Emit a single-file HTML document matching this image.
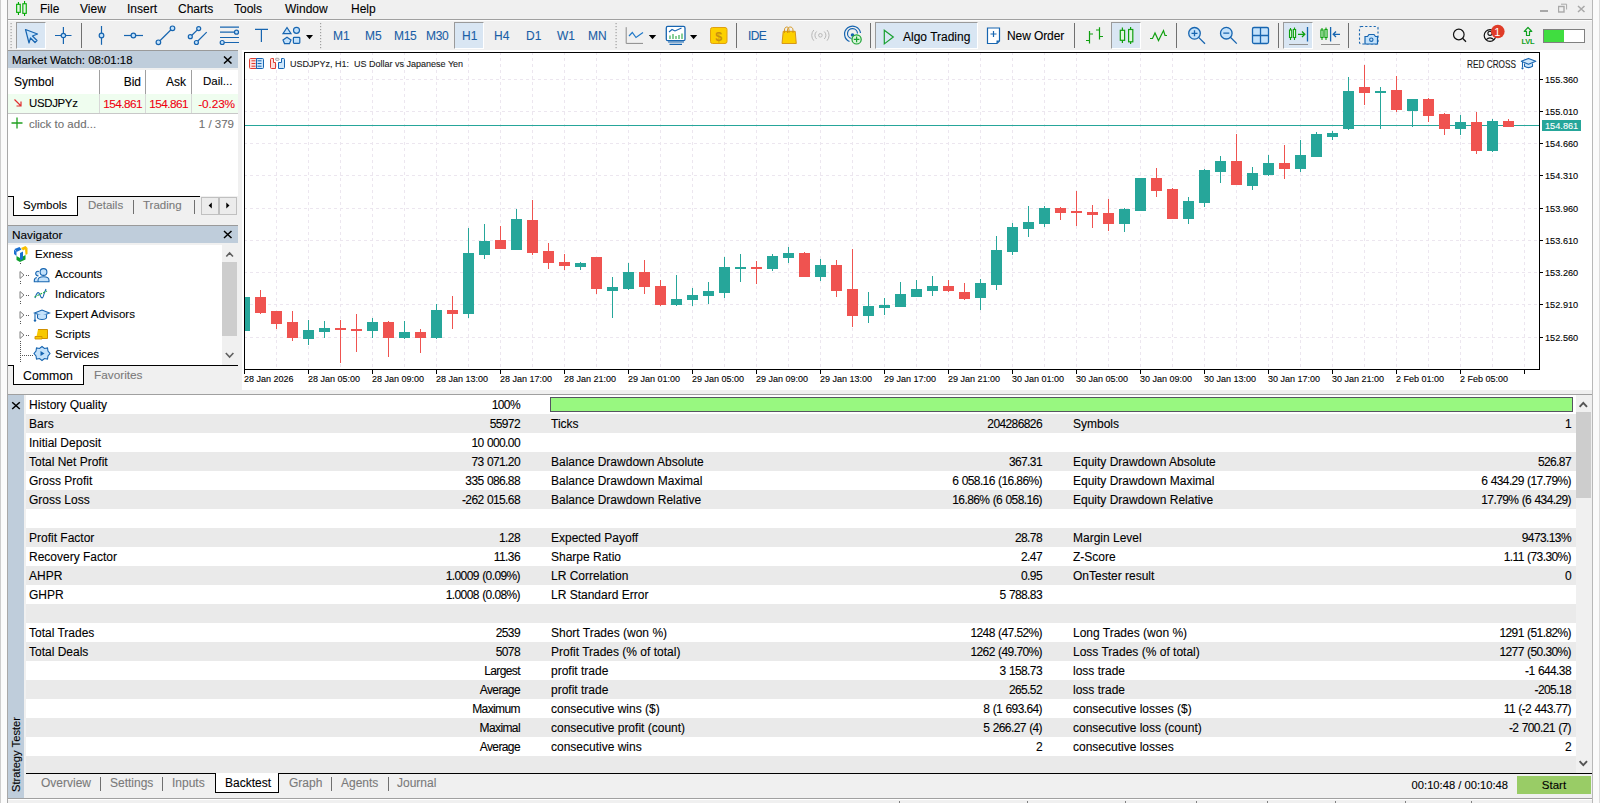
<!DOCTYPE html>
<html><head><meta charset="utf-8"><style>
*{margin:0;padding:0;box-sizing:border-box}
html,body{width:1600px;height:803px;overflow:hidden;background:#f0f0f0;font-family:"Liberation Sans",sans-serif;color:#000}
.a{position:absolute}
.t{position:absolute;white-space:nowrap;line-height:1}
.t{-webkit-text-stroke:0.1px currentColor}

</style></head><body>
<div class="a" style="left:0;top:0;width:8px;height:803px;background:#fbfbfb;border-left:1px solid #cdcdcd"></div>
<div class="a" style="left:7px;top:0;width:1px;height:803px;background:#a8a8a8"></div>
<div class="a" style="left:1592px;top:0;width:1px;height:803px;background:#b8b8b8"></div>
<div class="a" style="left:1593px;top:0;width:7px;height:803px;background:#fbfbfb;border-right:1px solid #dcdcdc"></div>
<div class="a" style="left:8px;top:19px;width:1584px;height:1px;background:#a0a0a0"></div>
<div class="a" style="left:8px;top:20px;width:1584px;height:1px;background:#fdfdfd"></div>
<svg class="a" style="left:15px;top:0px" width="14" height="18" viewBox="0 0 14 18">
<g stroke="#00a800" stroke-width="1.1" fill="#e2f8e2"><rect x="1.65" y="4.3" width="3.6" height="8.05"/><rect x="7.85" y="3.75" width="3.4" height="9.6"/></g>
<g stroke="#00a800" stroke-width="1.1"><line x1="3.45" y1="2" x2="3.45" y2="4.3"/><line x1="3.45" y1="12.35" x2="3.45" y2="15"/><line x1="9.55" y1="1" x2="9.55" y2="3.75"/><line x1="9.55" y1="13.35" x2="9.55" y2="16"/></g>
</svg>
<div class="t" style="left:40px;top:3px;font-size:12px">File</div>
<div class="t" style="left:80px;top:3px;font-size:12px">View</div>
<div class="t" style="left:127px;top:3px;font-size:12px">Insert</div>
<div class="t" style="left:178px;top:3px;font-size:12px">Charts</div>
<div class="t" style="left:234px;top:3px;font-size:12px">Tools</div>
<div class="t" style="left:285px;top:3px;font-size:12px">Window</div>
<div class="t" style="left:351px;top:3px;font-size:12px">Help</div>
<div class="a" style="left:1540px;top:10px;width:8px;height:1.5px;background:#a8a8a8"></div>
<svg class="a" style="left:1558px;top:3px" width="10" height="10" viewBox="0 0 10 10"><rect x="0.5" y="3.5" width="5.5" height="5.5" fill="none" stroke="#a8a8a8" stroke-width="1.4"/><path d="M3 1.2H8.6V6.5" fill="none" stroke="#a8a8a8" stroke-width="1"/></svg>
<svg class="a" style="left:1577px;top:5px" width="9" height="8" viewBox="0 0 9 8"><path d="M1 1L7.5 7M7.5 1L1 7" stroke="#a8a8a8" stroke-width="1.5"/></svg>
<div class="a" style="left:16px;top:22px;width:30px;height:27px;background:#d9e6f3;border-top:1px solid #9a9a9a;border-left:1px solid #9a9a9a;border-bottom:1px solid #fff;border-right:1px solid #fff"></div>
<div class="a" style="left:454px;top:22px;width:30px;height:27px;background:#d9e6f3;border-top:1px solid #9a9a9a;border-left:1px solid #9a9a9a;border-bottom:1px solid #fff;border-right:1px solid #fff"></div>
<div class="a" style="left:875px;top:22px;width:103px;height:27px;background:#d9e6f3;border-top:1px solid #9a9a9a;border-left:1px solid #9a9a9a;border-bottom:1px solid #fff;border-right:1px solid #fff"></div>
<div class="a" style="left:1111px;top:22px;width:30px;height:27px;background:#d9e6f3;border-top:1px solid #9a9a9a;border-left:1px solid #9a9a9a;border-bottom:1px solid #fff;border-right:1px solid #fff"></div>
<div class="a" style="left:1283px;top:22px;width:30px;height:27px;background:#d9e6f3;border-top:1px solid #9a9a9a;border-left:1px solid #9a9a9a;border-bottom:1px solid #fff;border-right:1px solid #fff"></div>
<div class="t" style="left:333px;top:30px;font-size:12px;color:#1a5fa6">M1</div>
<div class="t" style="left:365px;top:30px;font-size:12px;color:#1a5fa6">M5</div>
<div class="t" style="left:394px;top:30px;font-size:12px;color:#1a5fa6;letter-spacing:-0.3px">M15</div>
<div class="t" style="left:426px;top:30px;font-size:12px;color:#1a5fa6;letter-spacing:-0.3px">M30</div>
<div class="t" style="left:462px;top:30px;font-size:12px;color:#1a5fa6">H1</div>
<div class="t" style="left:494px;top:30px;font-size:12px;color:#1a5fa6">H4</div>
<div class="t" style="left:526px;top:30px;font-size:12px;color:#1a5fa6">D1</div>
<div class="t" style="left:557px;top:30px;font-size:12px;color:#1a5fa6">W1</div>
<div class="t" style="left:588px;top:30px;font-size:12px;color:#1a5fa6">MN</div>
<div class="t" style="left:748px;top:30px;font-size:12px;letter-spacing:-0.6px;color:#1a5fa6">IDE</div>
<div class="t" style="left:903px;top:31px;font-size:12px">Algo Trading</div>
<div class="t" style="left:1007px;top:30px;font-size:12px;letter-spacing:-0.1px">New Order</div>
<svg class="a" style="left:0;top:0" width="1600" height="50" viewBox="0 0 1600 50">
<g fill="#a0a0a0">
<rect x="10.5" y="23" width="1.2" height="1.2"/><rect x="10.5" y="26" width="1.2" height="1.2"/><rect x="10.5" y="29" width="1.2" height="1.2"/><rect x="10.5" y="32" width="1.2" height="1.2"/><rect x="10.5" y="35" width="1.2" height="1.2"/><rect x="10.5" y="38" width="1.2" height="1.2"/><rect x="10.5" y="41" width="1.2" height="1.2"/><rect x="10.5" y="44" width="1.2" height="1.2"/><rect x="10.5" y="47" width="1.2" height="1.2"/>
<rect x="320" y="23" width="1.2" height="1.2"/><rect x="320" y="26" width="1.2" height="1.2"/><rect x="320" y="29" width="1.2" height="1.2"/><rect x="320" y="32" width="1.2" height="1.2"/><rect x="320" y="35" width="1.2" height="1.2"/><rect x="320" y="38" width="1.2" height="1.2"/><rect x="320" y="41" width="1.2" height="1.2"/><rect x="320" y="44" width="1.2" height="1.2"/><rect x="320" y="47" width="1.2" height="1.2"/>
<rect x="615.5" y="23" width="1.2" height="1.2"/><rect x="615.5" y="26" width="1.2" height="1.2"/><rect x="615.5" y="29" width="1.2" height="1.2"/><rect x="615.5" y="32" width="1.2" height="1.2"/><rect x="615.5" y="35" width="1.2" height="1.2"/><rect x="615.5" y="38" width="1.2" height="1.2"/><rect x="615.5" y="41" width="1.2" height="1.2"/><rect x="615.5" y="44" width="1.2" height="1.2"/><rect x="615.5" y="47" width="1.2" height="1.2"/>
</g>
<g fill="#707070">
<rect x="81" y="23" width="1" height="25"/><rect x="736" y="23" width="1" height="25"/><rect x="870" y="23" width="1" height="25"/><rect x="1074" y="23" width="1" height="25"/><rect x="1176" y="23" width="1" height="25"/><rect x="1278" y="23" width="1" height="25"/><rect x="1348" y="23" width="1" height="25"/>
</g>
<!-- arrow cursor -->
<path d="M25.5 29.5 L37.5 34 L32.5 36 L37 40.5 L35 42.5 L30.5 38 L29 43 Z" fill="#c4e2fb" stroke="#1765b0" stroke-width="1.2" stroke-linejoin="round"/>
<g stroke="#1765b0" stroke-width="1.2" fill="#c4e2fb">
<!-- crosshair -->
<path d="M55 35.5H71.5M63.4 27V44" fill="none"/>
<circle cx="63.4" cy="35.5" r="2.2"/>
<!-- vline -->
<path d="M101.5 26V44.8" fill="none"/><circle cx="101.5" cy="35.5" r="2.3"/>
<!-- hline -->
<path d="M124 35.5H143" fill="none"/><circle cx="133.4" cy="35.5" r="2.3"/>
<!-- trend -->
<path d="M158.4 42.3L172.5 28.3" fill="none"/><circle cx="158.4" cy="42.3" r="2.3"/><circle cx="172.5" cy="28.3" r="2.3"/>
<!-- channel -->
<path d="M190.3 36.7L198.7 28.6M196.4 42.5L206.7 32.2" fill="none"/><circle cx="190.3" cy="36.7" r="2"/><circle cx="198.7" cy="28.6" r="2"/><circle cx="196.4" cy="42.5" r="2"/>
<!-- fibo -->
<path d="M220 27.2H239M220 32.2H237M220 37.5H239M224 42.5H239" fill="none"/><circle cx="236.5" cy="32.2" r="2"/><circle cx="222.2" cy="42.5" r="2"/>
<!-- T -->
<path d="M255 29.4H268M261.4 29.4V42" fill="none"/>
<!-- shapes -->
<path d="M287 27.5L291 33.6H283Z"/><circle cx="296.5" cy="30.3" r="3"/><path d="M287 37.2L291 40L289.5 43.6H284.5L283 40Z"/><rect x="293.4" y="37.3" width="6.4" height="6.1" rx="0.8"/>
</g>
<g fill="#000"><path d="M306 35H313L309.5 39.2Z"/><path d="M648.8 35H656.2L652.5 39.2Z"/><path d="M690 35H697.2L693.6 39.2Z"/></g>
<!-- line chart -->
<path d="M626.2 27.2V43.4H643" fill="none" stroke="#8a8a8a" stroke-width="1"/>
<path d="M629 36L632.3 32.5L636 37.5L643 32.5" fill="none" stroke="#1f78c8" stroke-width="1.2"/>
<!-- template -->
<rect x="666.3" y="26.4" width="18.7" height="14.3" rx="1.5" fill="#fff" stroke="#1765b0" stroke-width="1.3"/>
<path d="M668 42H684M669.5 44.3H682" stroke="#1765b0" stroke-width="1.2"/>
<path d="M669 32L672 29.5L675 31L681.5 28" fill="none" stroke="#1765b0" stroke-width="1.1"/>
<g fill="#10a030"><rect x="669.5" y="35.5" width="1" height="3.5"/><rect x="672.5" y="34" width="1" height="5"/><rect x="675.5" y="36" width="1" height="3"/><rect x="678.5" y="35" width="1" height="4"/><rect x="681.5" y="33.5" width="1" height="5.5"/></g>
<!-- $ -->
<rect x="710.5" y="27.5" width="16.5" height="16" rx="2" fill="#fdd000" stroke="#e0a010" stroke-width="1"/>
<text x="718.8" y="40.5" text-anchor="middle" font-family="Liberation Sans" font-size="12.5" font-weight="bold" fill="#c89010">$</text>
<!-- bag -->
<path d="M782 43.5L783.2 31.3H795.2L796.3 43.5Z" fill="#fdd000" stroke="#d29010" stroke-width="0.9"/>
<path d="M784.5 33V30C784.5 26 789 26 789 30V33M787.5 33V30C787.5 26 793 26 793 30V33" fill="none" stroke="#d29010" stroke-width="0.9"/>
<!-- signal -->
<g fill="none" stroke="#b8b8b8" stroke-width="1"><circle cx="820.4" cy="35.3" r="1.8"/><path d="M816.6 31.5A5 5 0 0 0 816.6 39M824.2 31.5A5 5 0 0 1 824.2 39M813.8 30A8 8 0 0 0 813.8 40.7M827 30A8 8 0 0 1 827 40.7"/></g>
<!-- vps -->
<g fill="none" stroke="#1765b0" stroke-width="1.2"><path d="M849.5 41.5A8 8 0 1 1 860.5 33"/><path d="M851.5 38.5A5 5 0 1 1 857.5 33.5"/></g>
<circle cx="852.5" cy="35" r="1.8" fill="#1765b0"/>
<circle cx="856.6" cy="39.4" r="4.6" fill="#d8f5d8" stroke="#18a030" stroke-width="1.2"/>
<path d="M856.6 36.6V42.2M853.8 39.4H859.4" stroke="#18a030" stroke-width="1.2"/>
<!-- algo triangle -->
<path d="M884.3 30.3L893.3 37.1L884.3 43.9Z" fill="none" stroke="#18a030" stroke-width="1.2"/>
<!-- new order doc -->
<path d="M987.5 28H999.5V41L997 43.5H987.5Z" fill="#fff" stroke="#1765b0" stroke-width="1.2"/>
<path d="M996.5 43.5L999.5 40.5H996.5Z" fill="#1765b0"/>
<path d="M993.5 31V37M990.5 34H996.5" stroke="#1765b0" stroke-width="1.2"/>
<!-- bar chart -->
<g stroke="#10a010" stroke-width="1.2" fill="none"><path d="M1089.5 31V43.5M1086 40.5H1089.5M1089.5 34H1093M1099.5 27.2V39.5M1096 30H1099.5M1099.5 36.5H1103"/>
<!-- candle icon -->
<path d="M1122.4 27.5V43M1130.6 27V44"/></g>
<rect x="1120.3" y="30.3" width="4.3" height="10" fill="#dff7df" stroke="#10a010" stroke-width="1.2"/>
<rect x="1128.6" y="29.5" width="4.2" height="12.3" fill="#dff7df" stroke="#10a010" stroke-width="1.2"/>
<path d="M1150 38.5H1152.5L1155 33L1158.5 40.5L1163.5 30.5L1165 35.5H1167" fill="none" stroke="#10a010" stroke-width="1.2"/>
<!-- zoom in/out -->
<g stroke="#1765b0" stroke-width="1.3" fill="#c4e2fb"><circle cx="1194.5" cy="33.3" r="5.8"/><circle cx="1226.3" cy="33.2" r="5.8"/></g>
<path d="M1198.6 37.4L1205 43.8M1191.5 33.3H1197.5M1194.5 30.3V36.3M1230.4 37.3L1236.8 43.6M1223.3 33.2H1229.3" stroke="#1765b0" stroke-width="1.3"/>
<!-- grid -->
<rect x="1252.5" y="27.5" width="16" height="16" rx="1.5" fill="#c4e2fb" stroke="#1765b0" stroke-width="1.3"/>
<path d="M1260.5 27.5V43.5M1252.5 35.5H1268.5" stroke="#1765b0" stroke-width="1.3"/>
<!-- autoscroll -->
<g stroke="#10a010" stroke-width="1.1" fill="#dff7df"><path d="M1290.5 28V40M1294.5 27.5V40" fill="none"/><rect x="1289.5" y="30" width="2.2" height="7.5"/><rect x="1293.4" y="29.5" width="2.2" height="8"/>
<path d="M1298 34.3H1304.5M1302 31.5L1304.8 34.3L1302 37" fill="none" stroke-width="1.3"/>
<path d="M1322 28V40M1326 27.5V40" fill="none"/><rect x="1320.9" y="30" width="2.2" height="7.5"/><rect x="1324.9" y="29.5" width="2.2" height="8"/></g>
<path d="M1307.5 27V41.5M1330.6 27V41.5M1333.5 34.3H1340M1336 31.5L1333.2 34.3L1336 37" fill="none" stroke="#1765b0" stroke-width="1.3"/>
<path d="M1289 44.5H1308M1321 44.5H1340" stroke="#909090" stroke-width="1"/>
<!-- screenshot -->
<rect x="1359.5" y="26.5" width="18.5" height="17.5" rx="1.5" fill="none" stroke="#1765b0" stroke-width="1.1" stroke-dasharray="2.2 2"/>
<path d="M1365 36.5H1367.5L1369 34.5H1374L1375.5 36.5H1377.5V44H1365Z" fill="#c4e2fb" stroke="#1765b0" stroke-width="1.2"/>
<circle cx="1371.3" cy="39.7" r="1.7" fill="none" stroke="#1765b0" stroke-width="1.1"/>
<!-- search -->
<circle cx="1458.8" cy="34.5" r="5.3" fill="none" stroke="#111" stroke-width="1.2"/><path d="M1462.6 38.3L1466 41.8" stroke="#111" stroke-width="1.3"/>
<!-- account -->
<circle cx="1490" cy="35.5" r="5.8" fill="none" stroke="#111" stroke-width="1.2"/>
<circle cx="1490" cy="33.3" r="2.1" fill="none" stroke="#111" stroke-width="1.1"/>
<path d="M1486 39.8Q1490 35.8 1494 39.8" fill="none" stroke="#111" stroke-width="1.1"/>
<circle cx="1497.8" cy="31.5" r="6.8" fill="#e03c28"/>
<text x="1497.3" y="35.8" text-anchor="middle" font-family="Liberation Sans" font-size="11" fill="#fff">1</text>
<!-- LVL -->
<path d="M1528 27.5L1531.8 31.3H1529.5V35.5H1526.5V31.3H1524.2Z" fill="none" stroke="#10a020" stroke-width="1.2" stroke-linejoin="round"/>
<text x="1528" y="43.5" text-anchor="middle" font-family="Liberation Sans" font-weight="bold" font-size="7.5" fill="#10a020" letter-spacing="-0.2">LVL</text>
<!-- progress -->
<rect x="1543.5" y="29.5" width="41" height="13" fill="#fff" stroke="#808080" stroke-width="1"/>
<rect x="1544" y="30" width="20" height="12" fill="#40dd40"/>
</svg>
<!-- Market Watch -->
<div class="a" style="left:8px;top:50px;width:230px;height:1px;background:#9a9a9a"></div>
<div class="a" style="left:8px;top:51px;width:230px;height:17px;background:#bfcddb"></div>
<div class="t" style="left:12px;top:55px;font-size:11.4px">Market Watch: 08:01:18</div>
<svg class="a" style="left:223px;top:56px" width="10" height="8" viewBox="0 0 10 8"><path d="M1 0.5L8.5 7.5M8.5 0.5L1 7.5" stroke="#000" stroke-width="1.5"/></svg>
<div class="a" style="left:8px;top:70px;width:230px;height:126px;background:#fff"></div>
<div class="a" style="left:99px;top:70px;width:1px;height:24px;background:#a0a0a0"></div>
<div class="a" style="left:145px;top:70px;width:1px;height:24px;background:#a0a0a0"></div>
<div class="a" style="left:191px;top:70px;width:1px;height:24px;background:#a0a0a0"></div>
<div class="t" style="left:14px;top:76px;font-size:12px">Symbol</div>
<div class="t" style="left:100px;width:41px;text-align:right;top:76px;font-size:12px">Bid</div>
<div class="t" style="left:146px;width:40px;text-align:right;top:76px;font-size:12px">Ask</div>
<div class="t" style="left:203px;top:76px;font-size:11.5px">Dail...</div>
<div class="a" style="left:8px;top:94px;width:230px;height:19px;background:#effdef"></div>
<div class="a" style="left:99px;top:94px;width:1px;height:19px;background:#d8d8d8"></div>
<div class="a" style="left:145px;top:94px;width:1px;height:19px;background:#d8d8d8"></div>
<div class="a" style="left:191px;top:94px;width:1px;height:19px;background:#d8d8d8"></div>
<svg class="a" style="left:13px;top:98px" width="10" height="10" viewBox="0 0 10 10"><path d="M1.5 1.5L8 8M8 3.5V8H3.5" fill="none" stroke="#e03030" stroke-width="1.2"/></svg>
<div class="t" style="left:29px;top:98px;font-size:11.4px;letter-spacing:-0.3px">USDJPYz</div>
<div class="t" style="left:100px;width:42px;text-align:right;top:99px;font-size:11.8px;letter-spacing:-0.55px;color:#f00010">154.861</div>
<div class="t" style="left:146px;width:42px;text-align:right;top:99px;font-size:11.8px;letter-spacing:-0.55px;color:#f00010">154.861</div>
<div class="t" style="left:192px;width:43px;text-align:right;top:99px;font-size:11.8px;letter-spacing:-0.1px;color:#f00010">-0.23%</div>
<div class="a" style="left:8px;top:113px;width:230px;height:1px;background:#c8c8c8"></div>
<svg class="a" style="left:11px;top:117px" width="12" height="12" viewBox="0 0 12 12"><path d="M6 0.5V11.5M0.5 6H11.5" stroke="#20a020" stroke-width="1.3"/></svg>
<div class="t" style="left:29px;top:119px;font-size:11.5px;color:#707070">click to add...</div>
<div class="t" style="left:180px;width:54px;text-align:right;top:119px;font-size:11.5px;color:#707070">1 / 379</div>
<!-- tabs -->
<div class="a" style="left:8px;top:196px;width:192px;height:1px;background:#000"></div>
<div class="a" style="left:13px;top:196px;width:65px;height:20px;background:#fff;border-left:1px solid #000;border-bottom:1px solid #000;border-right:1px solid #000"></div>
<div class="t" style="left:23px;top:200px;font-size:11.5px">Symbols</div>
<div class="t" style="left:88px;top:200px;font-size:11.5px;color:#7a7a7a">Details</div>
<div class="a" style="left:133px;top:200px;width:1px;height:14px;background:#707070"></div>
<div class="t" style="left:143px;top:200px;font-size:11.5px;color:#7a7a7a">Trading</div>
<div class="a" style="left:194px;top:200px;width:1px;height:14px;background:#707070"></div>
<div class="a" style="left:201px;top:197px;width:18px;height:18px;background:#ececec;border:1px solid #c0c0c0"></div>
<div class="a" style="left:219px;top:197px;width:18px;height:18px;background:#ececec;border:1px solid #c0c0c0"></div>
<svg class="a" style="left:201px;top:197px" width="36" height="18" viewBox="0 0 36 18"><path d="M10.8 5.5V11.5L7.6 8.5Z M25.3 5.5V11.5L28.5 8.5Z" fill="#000"/></svg>
<div class="a" style="left:8px;top:225px;width:230px;height:1px;background:#9a9a9a"></div>
<div class="a" style="left:8px;top:226px;width:230px;height:17px;background:#bfcddb"></div>
<div class="t" style="left:12px;top:230px;font-size:11.8px">Navigator</div>
<svg class="a" style="left:223px;top:230px" width="10" height="9" viewBox="0 0 10 9"><path d="M1 1L8.5 8M8.5 1L1 8" stroke="#000" stroke-width="1.5"/></svg>
<div class="a" style="left:8px;top:245px;width:214px;height:120px;background:#fff"></div>
<div class="a" style="left:222px;top:244px;width:16px;height:121px;background:#f0f0f0"></div>
<div class="a" style="left:222px;top:262px;width:15px;height:74px;background:#cdcdcd"></div>
<svg class="a" style="left:222px;top:244px" width="16" height="121" viewBox="0 0 16 121"><path d="M4.3 12.5L7.6 9L11 12.5M3.8 109L7.6 113L11.4 109" fill="none" stroke="#606060" stroke-width="1.6"/></svg>
<svg class="a" style="left:8px;top:244px" width="214" height="121" viewBox="0 0 214 121">
<g fill="#555"><rect x="12" y="19" width="1" height="1"/><rect x="12" y="37" width="1" height="1"/><rect x="12" y="39" width="1" height="1"/><rect x="12" y="57" width="1" height="1"/><rect x="12" y="59" width="1" height="1"/><rect x="12" y="77" width="1" height="1"/><rect x="12" y="79" width="1" height="1"/>
<rect x="12" y="97" width="1" height="1"/><rect x="12" y="99" width="1" height="1"/><rect x="12" y="101" width="1" height="1"/><rect x="12" y="103" width="1" height="1"/><rect x="12" y="105" width="1" height="1"/><rect x="12" y="107" width="1" height="1"/><rect x="12" y="109" width="1" height="1"/><rect x="12" y="111" width="1" height="1"/><rect x="12" y="113" width="1" height="1"/><rect x="12" y="115" width="1" height="1"/><rect x="12" y="117" width="1" height="1"/>
<rect x="18" y="31" width="1" height="1"/><rect x="20" y="31" width="1" height="1"/><rect x="18" y="51" width="1" height="1"/><rect x="20" y="51" width="1" height="1"/><rect x="18" y="71" width="1" height="1"/><rect x="20" y="71" width="1" height="1"/><rect x="18" y="91" width="1" height="1"/><rect x="20" y="91" width="1" height="1"/>
<rect x="14" y="111" width="1" height="1"/><rect x="16" y="111" width="1" height="1"/><rect x="18" y="111" width="1" height="1"/><rect x="20" y="111" width="1" height="1"/><rect x="22" y="111" width="1" height="1"/><rect x="24" y="111" width="1" height="1"/></g>
<g fill="none" stroke="#808080" stroke-width="1"><path d="M12 27.5V34.5L16 31Z"/><path d="M12 47.5V54.5L16 51Z"/><path d="M12 67.5V74.5L16 71Z"/><path d="M12 87.5V94.5L16 91Z"/></g>
<!-- exness -->
<path d="M6.5 5L11.5 3L13.5 5.5L8.5 8Z" fill="#1a6fd0"/><path d="M6 5.5L8.5 8V12L6 10Z" fill="#1a6fd0"/>
<path d="M13 4L17.5 2L19.5 4L15 6.5Z" fill="#f8c000"/><path d="M17 4.5L19.5 4V10L17.5 11Z" fill="#f8c000"/>
<path d="M8.5 12L12 14L17.5 11V15.5L12 18L8.5 16Z" fill="#10a030"/><path d="M12 9L15 7.5V15L12 16.5Z" fill="#1a6fd0"/>
<!-- accounts -->
<g fill="#c4e2fb" stroke="#1765b0" stroke-width="1.1">
<path d="M31 27.5A2.3 2.3 0 1 0 30.5 31.8"/>
<path d="M28.8 33.5C27 33.8 26.3 35 26.3 36.5V37.8H29.8"/>
<circle cx="35.5" cy="28" r="3.4"/>
<path d="M30 37.8V36.2C30 34 32 32.8 35.5 32.8C39 32.8 41 34 41 36.2V37.8Z"/>
</g>
<!-- indicators -->
<path d="M27 54C29 48 30.5 47 32 51C33.5 55 35 55 36 50L38 45" fill="none" stroke="#1765b0" stroke-width="1.1"/>
<path d="M26.5 53L39 47" fill="none" stroke="#20b040" stroke-width="1.1" stroke-dasharray="2 1.2"/>
<!-- EA -->
<path d="M26.5 69L34 66L41.5 69L34 72Z" fill="#c4e2fb" stroke="#1765b0" stroke-width="1.1"/>
<path d="M29.5 70.5V74C31 76 37 76 38.5 74V70.5" fill="#c4e2fb" stroke="#1765b0" stroke-width="1.1"/>
<path d="M27 69.5V75.5" stroke="#1765b0" stroke-width="1.1"/><circle cx="27" cy="76.5" r="1.2" fill="#1765b0"/>
<!-- scripts -->
<path d="M30 85.5H39.5V94.5H28.5V92.5" fill="#f8c800" stroke="#d09000" stroke-width="1"/>
<path d="M27 92.5H34V95H27Z" fill="#f8c800" stroke="#d09000" stroke-width="0.9"/>
<!-- services -->
<path d="M34 102.5L36.5 104.5L39.5 104L40 107L42 109.5L40 112L39.5 115L36.5 114.5L34 116.5L31.5 114.5L28.5 115L28 112L26 109.5L28 107L28.5 104L31.5 104.5Z" fill="#c4e2fb" stroke="#1765b0" stroke-width="1.1"/>
<path d="M32.5 107V112L36.5 109.5Z" fill="#1765b0"/>
</svg>
<div class="t" style="left:35px;top:249px;font-size:11.5px">Exness</div>
<div class="t" style="left:55px;top:269px;font-size:11.5px">Accounts</div>
<div class="t" style="left:55px;top:289px;font-size:11.5px">Indicators</div>
<div class="t" style="left:55px;top:309px;font-size:11.5px">Expert Advisors</div>
<div class="t" style="left:55px;top:329px;font-size:11.5px">Scripts</div>
<div class="t" style="left:55px;top:349px;font-size:11.5px">Services</div>
<!-- nav tabs -->
<div class="a" style="left:8px;top:365px;width:230px;height:1px;background:#000"></div>
<div class="a" style="left:13px;top:365px;width:71px;height:20px;background:#fff;border-left:1px solid #000;border-bottom:1px solid #000;border-right:1px solid #000"></div>
<div class="t" style="left:23px;top:370px;font-size:12.3px">Common</div>
<div class="t" style="left:94px;top:370px;font-size:11.8px;color:#7a7a7a">Favorites</div>
<div class="a" style="left:8px;top:394px;width:1584px;height:1px;background:#a0a0a0"></div>
<div class="a" style="left:242px;top:50px;width:1350px;height:340px;background:#fff"></div>
<svg class="a" style="left:0;top:0" width="1600" height="400" viewBox="0 0 1600 400" shape-rendering="crispEdges">
<defs><clipPath id="cp"><rect x="245" y="53" width="1294" height="316"/></clipPath></defs>
<path d="M244 79.5H1539 M244 111.5H1539 M244 143.5H1539 M244 175.5H1539 M244 208.5H1539 M244 240.5H1539 M244 272.5H1539 M244 304.5H1539 M244 337.5H1539 M276.5 52V369 M308.5 52V369 M340.5 52V369 M372.5 52V369 M404.5 52V369 M436.5 52V369 M468.5 52V369 M500.5 52V369 M532.5 52V369 M564.5 52V369 M596.5 52V369 M628.5 52V369 M660.5 52V369 M692.5 52V369 M724.5 52V369 M756.5 52V369 M788.5 52V369 M820.5 52V369 M852.5 52V369 M884.5 52V369 M916.5 52V369 M948.5 52V369 M980.5 52V369 M1012.5 52V369 M1044.5 52V369 M1076.5 52V369 M1108.5 52V369 M1140.5 52V369 M1172.5 52V369 M1204.5 52V369 M1236.5 52V369 M1268.5 52V369 M1300.5 52V369 M1332.5 52V369 M1364.5 52V369 M1396.5 52V369 M1428.5 52V369 M1460.5 52V369 M1492.5 52V369 M1524.5 52V369" stroke="#ece6ef" stroke-width="1" stroke-dasharray="3 3" fill="none"/>
<rect x="245" y="125" width="1294" height="1" fill="#26a69a"/>
<g clip-path="url(#cp)">
<rect x="244" y="297" width="1" height="34" fill="#26a69a"/>
<rect x="239" y="297" width="11" height="34" fill="#26a69a"/>
<rect x="260" y="290" width="1" height="24" fill="#ef5350"/>
<rect x="255" y="297" width="11" height="16" fill="#ef5350"/>
<rect x="276" y="311" width="1" height="18" fill="#ef5350"/>
<rect x="271" y="311" width="11" height="13" fill="#ef5350"/>
<rect x="292" y="311" width="1" height="30" fill="#ef5350"/>
<rect x="287" y="322" width="11" height="16" fill="#ef5350"/>
<rect x="308" y="320" width="1" height="25" fill="#26a69a"/>
<rect x="303" y="330" width="11" height="9" fill="#26a69a"/>
<rect x="324" y="321" width="1" height="17" fill="#26a69a"/>
<rect x="319" y="328" width="11" height="4" fill="#26a69a"/>
<rect x="340" y="320" width="1" height="43" fill="#ef5350"/>
<rect x="335" y="328" width="11" height="2" fill="#ef5350"/>
<rect x="356" y="314" width="1" height="38" fill="#ef5350"/>
<rect x="351" y="329" width="11" height="2" fill="#ef5350"/>
<rect x="372" y="318" width="1" height="20" fill="#26a69a"/>
<rect x="367" y="322" width="11" height="9" fill="#26a69a"/>
<rect x="388" y="321" width="1" height="36" fill="#ef5350"/>
<rect x="383" y="322" width="11" height="16" fill="#ef5350"/>
<rect x="404" y="321" width="1" height="18" fill="#26a69a"/>
<rect x="399" y="332" width="11" height="6" fill="#26a69a"/>
<rect x="420" y="329" width="1" height="24" fill="#ef5350"/>
<rect x="415" y="332" width="11" height="6" fill="#ef5350"/>
<rect x="436" y="304" width="1" height="35" fill="#26a69a"/>
<rect x="431" y="310" width="11" height="28" fill="#26a69a"/>
<rect x="452" y="296" width="1" height="33" fill="#ef5350"/>
<rect x="447" y="310" width="11" height="4" fill="#ef5350"/>
<rect x="468" y="228" width="1" height="90" fill="#26a69a"/>
<rect x="463" y="253" width="11" height="61" fill="#26a69a"/>
<rect x="484" y="224" width="1" height="35" fill="#26a69a"/>
<rect x="479" y="241" width="11" height="14" fill="#26a69a"/>
<rect x="500" y="226" width="1" height="23" fill="#ef5350"/>
<rect x="495" y="240" width="11" height="9" fill="#ef5350"/>
<rect x="516" y="209" width="1" height="41" fill="#26a69a"/>
<rect x="511" y="219" width="11" height="31" fill="#26a69a"/>
<rect x="532" y="200" width="1" height="55" fill="#ef5350"/>
<rect x="527" y="220" width="11" height="33" fill="#ef5350"/>
<rect x="548" y="243" width="1" height="26" fill="#ef5350"/>
<rect x="543" y="251" width="11" height="12" fill="#ef5350"/>
<rect x="564" y="254" width="1" height="16" fill="#ef5350"/>
<rect x="559" y="262" width="11" height="4" fill="#ef5350"/>
<rect x="580" y="262" width="1" height="8" fill="#26a69a"/>
<rect x="575" y="263" width="11" height="4" fill="#26a69a"/>
<rect x="596" y="257" width="1" height="37" fill="#ef5350"/>
<rect x="591" y="257" width="11" height="32" fill="#ef5350"/>
<rect x="612" y="277" width="1" height="41" fill="#26a69a"/>
<rect x="607" y="287" width="11" height="4" fill="#26a69a"/>
<rect x="628" y="263" width="1" height="27" fill="#26a69a"/>
<rect x="623" y="272" width="11" height="17" fill="#26a69a"/>
<rect x="644" y="260" width="1" height="34" fill="#ef5350"/>
<rect x="639" y="272" width="11" height="15" fill="#ef5350"/>
<rect x="660" y="280" width="1" height="26" fill="#ef5350"/>
<rect x="655" y="286" width="11" height="19" fill="#ef5350"/>
<rect x="676" y="275" width="1" height="31" fill="#26a69a"/>
<rect x="671" y="299" width="11" height="6" fill="#26a69a"/>
<rect x="692" y="288" width="1" height="18" fill="#26a69a"/>
<rect x="687" y="295" width="11" height="5" fill="#26a69a"/>
<rect x="708" y="282" width="1" height="22" fill="#26a69a"/>
<rect x="703" y="291" width="11" height="5" fill="#26a69a"/>
<rect x="724" y="257" width="1" height="41" fill="#26a69a"/>
<rect x="719" y="267" width="11" height="26" fill="#26a69a"/>
<rect x="740" y="254" width="1" height="28" fill="#26a69a"/>
<rect x="735" y="267" width="11" height="2" fill="#26a69a"/>
<rect x="756" y="261" width="1" height="23" fill="#ef5350"/>
<rect x="751" y="267" width="11" height="2" fill="#ef5350"/>
<rect x="772" y="254" width="1" height="17" fill="#26a69a"/>
<rect x="767" y="256" width="11" height="13" fill="#26a69a"/>
<rect x="788" y="247" width="1" height="16" fill="#26a69a"/>
<rect x="783" y="253" width="11" height="5" fill="#26a69a"/>
<rect x="804" y="252" width="1" height="25" fill="#ef5350"/>
<rect x="799" y="253" width="11" height="24" fill="#ef5350"/>
<rect x="820" y="259" width="1" height="22" fill="#26a69a"/>
<rect x="815" y="265" width="11" height="12" fill="#26a69a"/>
<rect x="836" y="260" width="1" height="37" fill="#ef5350"/>
<rect x="831" y="265" width="11" height="26" fill="#ef5350"/>
<rect x="852" y="249" width="1" height="78" fill="#ef5350"/>
<rect x="847" y="289" width="11" height="27" fill="#ef5350"/>
<rect x="868" y="292" width="1" height="31" fill="#26a69a"/>
<rect x="863" y="306" width="11" height="10" fill="#26a69a"/>
<rect x="884" y="298" width="1" height="17" fill="#26a69a"/>
<rect x="879" y="305" width="11" height="3" fill="#26a69a"/>
<rect x="900" y="282" width="1" height="25" fill="#26a69a"/>
<rect x="895" y="294" width="11" height="13" fill="#26a69a"/>
<rect x="916" y="280" width="1" height="17" fill="#26a69a"/>
<rect x="911" y="289" width="11" height="8" fill="#26a69a"/>
<rect x="932" y="276" width="1" height="20" fill="#26a69a"/>
<rect x="927" y="286" width="11" height="5" fill="#26a69a"/>
<rect x="948" y="280" width="1" height="12" fill="#ef5350"/>
<rect x="943" y="286" width="11" height="5" fill="#ef5350"/>
<rect x="964" y="283" width="1" height="17" fill="#ef5350"/>
<rect x="959" y="292" width="11" height="7" fill="#ef5350"/>
<rect x="980" y="279" width="1" height="31" fill="#26a69a"/>
<rect x="975" y="283" width="11" height="15" fill="#26a69a"/>
<rect x="996" y="236" width="1" height="54" fill="#26a69a"/>
<rect x="991" y="250" width="11" height="35" fill="#26a69a"/>
<rect x="1012" y="223" width="1" height="32" fill="#26a69a"/>
<rect x="1007" y="227" width="11" height="25" fill="#26a69a"/>
<rect x="1028" y="206" width="1" height="31" fill="#26a69a"/>
<rect x="1023" y="222" width="11" height="7" fill="#26a69a"/>
<rect x="1044" y="206" width="1" height="21" fill="#26a69a"/>
<rect x="1039" y="208" width="11" height="16" fill="#26a69a"/>
<rect x="1060" y="207" width="1" height="13" fill="#ef5350"/>
<rect x="1055" y="208" width="11" height="5" fill="#ef5350"/>
<rect x="1076" y="191" width="1" height="35" fill="#ef5350"/>
<rect x="1071" y="211" width="11" height="2" fill="#ef5350"/>
<rect x="1092" y="205" width="1" height="23" fill="#ef5350"/>
<rect x="1087" y="212" width="11" height="3" fill="#ef5350"/>
<rect x="1108" y="199" width="1" height="32" fill="#ef5350"/>
<rect x="1103" y="213" width="11" height="11" fill="#ef5350"/>
<rect x="1124" y="208" width="1" height="24" fill="#26a69a"/>
<rect x="1119" y="209" width="11" height="15" fill="#26a69a"/>
<rect x="1140" y="178" width="1" height="33" fill="#26a69a"/>
<rect x="1135" y="178" width="11" height="33" fill="#26a69a"/>
<rect x="1156" y="168" width="1" height="29" fill="#ef5350"/>
<rect x="1151" y="178" width="11" height="13" fill="#ef5350"/>
<rect x="1172" y="188" width="1" height="31" fill="#ef5350"/>
<rect x="1167" y="189" width="11" height="30" fill="#ef5350"/>
<rect x="1188" y="197" width="1" height="27" fill="#26a69a"/>
<rect x="1183" y="201" width="11" height="18" fill="#26a69a"/>
<rect x="1204" y="169" width="1" height="38" fill="#26a69a"/>
<rect x="1199" y="170" width="11" height="33" fill="#26a69a"/>
<rect x="1220" y="156" width="1" height="27" fill="#26a69a"/>
<rect x="1215" y="161" width="11" height="11" fill="#26a69a"/>
<rect x="1236" y="134" width="1" height="51" fill="#ef5350"/>
<rect x="1231" y="161" width="11" height="24" fill="#ef5350"/>
<rect x="1252" y="167" width="1" height="23" fill="#26a69a"/>
<rect x="1247" y="173" width="11" height="13" fill="#26a69a"/>
<rect x="1268" y="155" width="1" height="21" fill="#26a69a"/>
<rect x="1263" y="163" width="11" height="12" fill="#26a69a"/>
<rect x="1284" y="145" width="1" height="34" fill="#ef5350"/>
<rect x="1279" y="163" width="11" height="6" fill="#ef5350"/>
<rect x="1300" y="140" width="1" height="32" fill="#26a69a"/>
<rect x="1295" y="155" width="11" height="14" fill="#26a69a"/>
<rect x="1316" y="132" width="1" height="25" fill="#26a69a"/>
<rect x="1311" y="134" width="11" height="23" fill="#26a69a"/>
<rect x="1332" y="131" width="1" height="9" fill="#26a69a"/>
<rect x="1327" y="133" width="11" height="4" fill="#26a69a"/>
<rect x="1348" y="77" width="1" height="53" fill="#26a69a"/>
<rect x="1343" y="91" width="11" height="38" fill="#26a69a"/>
<rect x="1364" y="65" width="1" height="40" fill="#ef5350"/>
<rect x="1359" y="87" width="11" height="6" fill="#ef5350"/>
<rect x="1380" y="87" width="1" height="42" fill="#26a69a"/>
<rect x="1375" y="91" width="11" height="2" fill="#26a69a"/>
<rect x="1396" y="76" width="1" height="36" fill="#ef5350"/>
<rect x="1391" y="90" width="11" height="20" fill="#ef5350"/>
<rect x="1412" y="99" width="1" height="28" fill="#26a69a"/>
<rect x="1407" y="99" width="11" height="12" fill="#26a69a"/>
<rect x="1428" y="98" width="1" height="24" fill="#ef5350"/>
<rect x="1423" y="99" width="11" height="17" fill="#ef5350"/>
<rect x="1444" y="113" width="1" height="22" fill="#ef5350"/>
<rect x="1439" y="114" width="11" height="15" fill="#ef5350"/>
<rect x="1460" y="115" width="1" height="20" fill="#26a69a"/>
<rect x="1455" y="122" width="11" height="7" fill="#26a69a"/>
<rect x="1476" y="112" width="1" height="42" fill="#ef5350"/>
<rect x="1471" y="122" width="11" height="29" fill="#ef5350"/>
<rect x="1492" y="119" width="1" height="33" fill="#26a69a"/>
<rect x="1487" y="121" width="11" height="30" fill="#26a69a"/>
<rect x="1508" y="119" width="1" height="8" fill="#ef5350"/>
<rect x="1503" y="121" width="11" height="6" fill="#ef5350"/>
</g>
<rect x="244.5" y="52.5" width="1295" height="317" fill="none" stroke="#000" stroke-width="1"/>
<rect x="1540" y="79" width="3" height="1" fill="#000"/>
<rect x="1540" y="111" width="3" height="1" fill="#000"/>
<rect x="1540" y="143" width="3" height="1" fill="#000"/>
<rect x="1540" y="175" width="3" height="1" fill="#000"/>
<rect x="1540" y="208" width="3" height="1" fill="#000"/>
<rect x="1540" y="240" width="3" height="1" fill="#000"/>
<rect x="1540" y="272" width="3" height="1" fill="#000"/>
<rect x="1540" y="304" width="3" height="1" fill="#000"/>
<rect x="1540" y="337" width="3" height="1" fill="#000"/>
<rect x="244" y="370" width="1" height="4" fill="#000"/>
<rect x="308" y="370" width="1" height="4" fill="#000"/>
<rect x="372" y="370" width="1" height="4" fill="#000"/>
<rect x="436" y="370" width="1" height="4" fill="#000"/>
<rect x="500" y="370" width="1" height="4" fill="#000"/>
<rect x="564" y="370" width="1" height="4" fill="#000"/>
<rect x="628" y="370" width="1" height="4" fill="#000"/>
<rect x="692" y="370" width="1" height="4" fill="#000"/>
<rect x="756" y="370" width="1" height="4" fill="#000"/>
<rect x="820" y="370" width="1" height="4" fill="#000"/>
<rect x="884" y="370" width="1" height="4" fill="#000"/>
<rect x="948" y="370" width="1" height="4" fill="#000"/>
<rect x="1012" y="370" width="1" height="4" fill="#000"/>
<rect x="1076" y="370" width="1" height="4" fill="#000"/>
<rect x="1140" y="370" width="1" height="4" fill="#000"/>
<rect x="1204" y="370" width="1" height="4" fill="#000"/>
<rect x="1268" y="370" width="1" height="4" fill="#000"/>
<rect x="1332" y="370" width="1" height="4" fill="#000"/>
<rect x="1396" y="370" width="1" height="4" fill="#000"/>
<rect x="1460" y="370" width="1" height="4" fill="#000"/>
<rect x="1524" y="370" width="1" height="4" fill="#000"/>
<rect x="1542" y="120" width="39" height="11" fill="#26a69a"/>
</svg>
<div class="t" style="left:1545px;top:76px;font-size:9.2px">155.360</div>
<div class="t" style="left:1545px;top:108px;font-size:9.2px">155.010</div>
<div class="t" style="left:1545px;top:140px;font-size:9.2px">154.660</div>
<div class="t" style="left:1545px;top:172px;font-size:9.2px">154.310</div>
<div class="t" style="left:1545px;top:205px;font-size:9.2px">153.960</div>
<div class="t" style="left:1545px;top:237px;font-size:9.2px">153.610</div>
<div class="t" style="left:1545px;top:269px;font-size:9.2px">153.260</div>
<div class="t" style="left:1545px;top:301px;font-size:9.2px">152.910</div>
<div class="t" style="left:1545px;top:334px;font-size:9.2px">152.560</div>
<div class="t" style="left:1545px;top:122px;font-size:9.2px;color:#fff">154.861</div>
<div class="t" style="left:244px;top:375px;font-size:9px">28 Jan 2026</div>
<div class="t" style="left:308px;top:375px;font-size:9px">28 Jan 05:00</div>
<div class="t" style="left:372px;top:375px;font-size:9px">28 Jan 09:00</div>
<div class="t" style="left:436px;top:375px;font-size:9px">28 Jan 13:00</div>
<div class="t" style="left:500px;top:375px;font-size:9px">28 Jan 17:00</div>
<div class="t" style="left:564px;top:375px;font-size:9px">28 Jan 21:00</div>
<div class="t" style="left:628px;top:375px;font-size:9px">29 Jan 01:00</div>
<div class="t" style="left:692px;top:375px;font-size:9px">29 Jan 05:00</div>
<div class="t" style="left:756px;top:375px;font-size:9px">29 Jan 09:00</div>
<div class="t" style="left:820px;top:375px;font-size:9px">29 Jan 13:00</div>
<div class="t" style="left:884px;top:375px;font-size:9px">29 Jan 17:00</div>
<div class="t" style="left:948px;top:375px;font-size:9px">29 Jan 21:00</div>
<div class="t" style="left:1012px;top:375px;font-size:9px">30 Jan 01:00</div>
<div class="t" style="left:1076px;top:375px;font-size:9px">30 Jan 05:00</div>
<div class="t" style="left:1140px;top:375px;font-size:9px">30 Jan 09:00</div>
<div class="t" style="left:1204px;top:375px;font-size:9px">30 Jan 13:00</div>
<div class="t" style="left:1268px;top:375px;font-size:9px">30 Jan 17:00</div>
<div class="t" style="left:1332px;top:375px;font-size:9px">30 Jan 21:00</div>
<div class="t" style="left:1396px;top:375px;font-size:9px">2 Feb 01:00</div>
<div class="t" style="left:1460px;top:375px;font-size:9px">2 Feb 05:00</div>
<div class="t" style="left:290px;top:60px;font-size:9px;color:#1a1a1a">USDJPYz, H1:&nbsp; US Dollar vs Japanese Yen</div>
<div class="t" style="left:1467px;top:60px;font-size:10.3px;transform:scaleX(0.8);transform-origin:0 0;color:#1a1a1a">RED CROSS</div>
<svg class="a" style="left:244px;top:53px" width="50" height="20" viewBox="244 53 50 20">
<path d="M256.5 58.5H250.5Q249.5 58.5 249.5 59.5V67.5Q249.5 68.5 250.5 68.5H256.5Z" fill="#fde0dc" stroke="#e03c30" stroke-width="1"/>
<path d="M256.5 58.5H262.5Q263.5 58.5 263.5 59.5V67.5Q263.5 68.5 262.5 68.5H256.5Z" fill="#cde6fb" stroke="#1765b0" stroke-width="1"/>
<path d="M251.5 60.8H255.5M251.5 63.5H255.5M251.5 66.2H255.5" stroke="#e03c30" stroke-width="1"/>
<path d="M257.5 60.8H261.5M257.5 63.5H261.5M257.5 66.2H261.5" stroke="#1765b0" stroke-width="1"/>
<path d="M270.5 59.5Q270.5 58.5 271.5 58.5H273.5V62.5H275.5V68.5H271.5Q270.5 68.5 270.5 67.5Z" fill="#fde0dc" stroke="#e03c30" stroke-width="1"/>
<path d="M284.5 59.5Q284.5 58.5 283.5 58.5H281.5V62.5H278.5V68.5H283.5Q284.5 68.5 284.5 67.5Z" fill="#cde6fb" stroke="#1765b0" stroke-width="1"/>
<rect x="275.5" y="58.3" width="3.5" height="2" rx="0.8" fill="none" stroke="#909090" stroke-width="0.8"/>
</svg>
<svg class="a" style="left:1518px;top:55px" width="20" height="16" viewBox="1518 55 20 16">
<path d="M1524.5 63.5V66.3Q1528.5 69 1532.5 66.3V63.5" fill="#cde6fb" stroke="#1765b0" stroke-width="1.1"/>
<path d="M1521.3 61.3L1528.5 58.4L1535.8 61.3L1528.5 64.3Z" fill="#cde6fb" stroke="#1765b0" stroke-width="1.1" stroke-linejoin="round"/>
<path d="M1522.5 61.8V67.3" stroke="#1765b0" stroke-width="1.1"/><circle cx="1522.5" cy="68.3" r="1.1" fill="#1765b0"/>
</svg><div class="a" style="left:8px;top:395px;width:16px;height:403px;background:#bfcddb"></div>
<svg class="a" style="left:11px;top:401px" width="10" height="10" viewBox="0 0 10 10"><path d="M1.2 1.2L8.8 8M8.8 1.2L1.2 8" stroke="#000" stroke-width="1.5"/></svg>
<div class="t" style="left:11px;top:792px;font-size:11.2px;transform:rotate(-90deg);transform-origin:0 0">Strategy Tester</div>
<div class="a" style="left:26px;top:395px;width:1550px;height:378px;overflow:hidden;background:#fff">
<div class="a" style="left:0;top:0px;width:1550px;height:19px;background:#fff"></div>
<div class="t" style="left:3px;top:4px;font-size:12px">History Quality</div>
<div class="t" style="left:200px;width:294px;text-align:right;top:4px;font-size:12px;letter-spacing:-0.6px;word-spacing:0.6px">100%</div>
<div class="a" style="left:0;top:19px;width:1550px;height:19px;background:#eaeaea"></div>
<div class="t" style="left:3px;top:23px;font-size:12px">Bars</div>
<div class="t" style="left:200px;width:294px;text-align:right;top:23px;font-size:12px;letter-spacing:-0.6px;word-spacing:0.6px">55972</div>
<div class="t" style="left:525px;top:23px;font-size:12px">Ticks</div>
<div class="t" style="left:716px;width:300px;text-align:right;top:23px;font-size:12px;letter-spacing:-0.6px;word-spacing:0.6px">204286826</div>
<div class="t" style="left:1047px;top:23px;font-size:12px">Symbols</div>
<div class="t" style="left:1245px;width:300px;text-align:right;top:23px;font-size:12px;letter-spacing:-0.6px;word-spacing:0.6px">1</div>
<div class="a" style="left:0;top:38px;width:1550px;height:19px;background:#fff"></div>
<div class="t" style="left:3px;top:42px;font-size:12px">Initial Deposit</div>
<div class="t" style="left:200px;width:294px;text-align:right;top:42px;font-size:12px;letter-spacing:-0.6px;word-spacing:0.6px">10 000.00</div>
<div class="a" style="left:0;top:57px;width:1550px;height:19px;background:#eaeaea"></div>
<div class="t" style="left:3px;top:61px;font-size:12px">Total Net Profit</div>
<div class="t" style="left:200px;width:294px;text-align:right;top:61px;font-size:12px;letter-spacing:-0.6px;word-spacing:0.6px">73 071.20</div>
<div class="t" style="left:525px;top:61px;font-size:12px">Balance Drawdown Absolute</div>
<div class="t" style="left:716px;width:300px;text-align:right;top:61px;font-size:12px;letter-spacing:-0.6px;word-spacing:0.6px">367.31</div>
<div class="t" style="left:1047px;top:61px;font-size:12px">Equity Drawdown Absolute</div>
<div class="t" style="left:1245px;width:300px;text-align:right;top:61px;font-size:12px;letter-spacing:-0.6px;word-spacing:0.6px">526.87</div>
<div class="a" style="left:0;top:76px;width:1550px;height:19px;background:#fff"></div>
<div class="t" style="left:3px;top:80px;font-size:12px">Gross Profit</div>
<div class="t" style="left:200px;width:294px;text-align:right;top:80px;font-size:12px;letter-spacing:-0.6px;word-spacing:0.6px">335 086.88</div>
<div class="t" style="left:525px;top:80px;font-size:12px">Balance Drawdown Maximal</div>
<div class="t" style="left:716px;width:300px;text-align:right;top:80px;font-size:12px;letter-spacing:-0.6px;word-spacing:0.6px">6 058.16 (16.86%)</div>
<div class="t" style="left:1047px;top:80px;font-size:12px">Equity Drawdown Maximal</div>
<div class="t" style="left:1245px;width:300px;text-align:right;top:80px;font-size:12px;letter-spacing:-0.6px;word-spacing:0.6px">6 434.29 (17.79%)</div>
<div class="a" style="left:0;top:95px;width:1550px;height:19px;background:#eaeaea"></div>
<div class="t" style="left:3px;top:99px;font-size:12px">Gross Loss</div>
<div class="t" style="left:200px;width:294px;text-align:right;top:99px;font-size:12px;letter-spacing:-0.6px;word-spacing:0.6px">-262 015.68</div>
<div class="t" style="left:525px;top:99px;font-size:12px">Balance Drawdown Relative</div>
<div class="t" style="left:716px;width:300px;text-align:right;top:99px;font-size:12px;letter-spacing:-0.6px;word-spacing:0.6px">16.86% (6 058.16)</div>
<div class="t" style="left:1047px;top:99px;font-size:12px">Equity Drawdown Relative</div>
<div class="t" style="left:1245px;width:300px;text-align:right;top:99px;font-size:12px;letter-spacing:-0.6px;word-spacing:0.6px">17.79% (6 434.29)</div>
<div class="a" style="left:0;top:114px;width:1550px;height:19px;background:#fff"></div>
<div class="a" style="left:0;top:133px;width:1550px;height:19px;background:#eaeaea"></div>
<div class="t" style="left:3px;top:137px;font-size:12px">Profit Factor</div>
<div class="t" style="left:200px;width:294px;text-align:right;top:137px;font-size:12px;letter-spacing:-0.6px;word-spacing:0.6px">1.28</div>
<div class="t" style="left:525px;top:137px;font-size:12px">Expected Payoff</div>
<div class="t" style="left:716px;width:300px;text-align:right;top:137px;font-size:12px;letter-spacing:-0.6px;word-spacing:0.6px">28.78</div>
<div class="t" style="left:1047px;top:137px;font-size:12px">Margin Level</div>
<div class="t" style="left:1245px;width:300px;text-align:right;top:137px;font-size:12px;letter-spacing:-0.6px;word-spacing:0.6px">9473.13%</div>
<div class="a" style="left:0;top:152px;width:1550px;height:19px;background:#fff"></div>
<div class="t" style="left:3px;top:156px;font-size:12px">Recovery Factor</div>
<div class="t" style="left:200px;width:294px;text-align:right;top:156px;font-size:12px;letter-spacing:-0.6px;word-spacing:0.6px">11.36</div>
<div class="t" style="left:525px;top:156px;font-size:12px">Sharpe Ratio</div>
<div class="t" style="left:716px;width:300px;text-align:right;top:156px;font-size:12px;letter-spacing:-0.6px;word-spacing:0.6px">2.47</div>
<div class="t" style="left:1047px;top:156px;font-size:12px">Z-Score</div>
<div class="t" style="left:1245px;width:300px;text-align:right;top:156px;font-size:12px;letter-spacing:-0.6px;word-spacing:0.6px">1.11 (73.30%)</div>
<div class="a" style="left:0;top:171px;width:1550px;height:19px;background:#eaeaea"></div>
<div class="t" style="left:3px;top:175px;font-size:12px">AHPR</div>
<div class="t" style="left:200px;width:294px;text-align:right;top:175px;font-size:12px;letter-spacing:-0.6px;word-spacing:0.6px">1.0009 (0.09%)</div>
<div class="t" style="left:525px;top:175px;font-size:12px">LR Correlation</div>
<div class="t" style="left:716px;width:300px;text-align:right;top:175px;font-size:12px;letter-spacing:-0.6px;word-spacing:0.6px">0.95</div>
<div class="t" style="left:1047px;top:175px;font-size:12px">OnTester result</div>
<div class="t" style="left:1245px;width:300px;text-align:right;top:175px;font-size:12px;letter-spacing:-0.6px;word-spacing:0.6px">0</div>
<div class="a" style="left:0;top:190px;width:1550px;height:19px;background:#fff"></div>
<div class="t" style="left:3px;top:194px;font-size:12px">GHPR</div>
<div class="t" style="left:200px;width:294px;text-align:right;top:194px;font-size:12px;letter-spacing:-0.6px;word-spacing:0.6px">1.0008 (0.08%)</div>
<div class="t" style="left:525px;top:194px;font-size:12px">LR Standard Error</div>
<div class="t" style="left:716px;width:300px;text-align:right;top:194px;font-size:12px;letter-spacing:-0.6px;word-spacing:0.6px">5 788.83</div>
<div class="a" style="left:0;top:209px;width:1550px;height:19px;background:#eaeaea"></div>
<div class="a" style="left:0;top:228px;width:1550px;height:19px;background:#fff"></div>
<div class="t" style="left:3px;top:232px;font-size:12px">Total Trades</div>
<div class="t" style="left:200px;width:294px;text-align:right;top:232px;font-size:12px;letter-spacing:-0.6px;word-spacing:0.6px">2539</div>
<div class="t" style="left:525px;top:232px;font-size:12px">Short Trades (won %)</div>
<div class="t" style="left:716px;width:300px;text-align:right;top:232px;font-size:12px;letter-spacing:-0.6px;word-spacing:0.6px">1248 (47.52%)</div>
<div class="t" style="left:1047px;top:232px;font-size:12px">Long Trades (won %)</div>
<div class="t" style="left:1245px;width:300px;text-align:right;top:232px;font-size:12px;letter-spacing:-0.6px;word-spacing:0.6px">1291 (51.82%)</div>
<div class="a" style="left:0;top:247px;width:1550px;height:19px;background:#eaeaea"></div>
<div class="t" style="left:3px;top:251px;font-size:12px">Total Deals</div>
<div class="t" style="left:200px;width:294px;text-align:right;top:251px;font-size:12px;letter-spacing:-0.6px;word-spacing:0.6px">5078</div>
<div class="t" style="left:525px;top:251px;font-size:12px">Profit Trades (% of total)</div>
<div class="t" style="left:716px;width:300px;text-align:right;top:251px;font-size:12px;letter-spacing:-0.6px;word-spacing:0.6px">1262 (49.70%)</div>
<div class="t" style="left:1047px;top:251px;font-size:12px">Loss Trades (% of total)</div>
<div class="t" style="left:1245px;width:300px;text-align:right;top:251px;font-size:12px;letter-spacing:-0.6px;word-spacing:0.6px">1277 (50.30%)</div>
<div class="a" style="left:0;top:266px;width:1550px;height:19px;background:#fff"></div>
<div class="t" style="left:200px;width:294px;text-align:right;top:270px;font-size:12px;letter-spacing:-0.6px;word-spacing:0.6px">Largest</div>
<div class="t" style="left:525px;top:270px;font-size:12px">profit trade</div>
<div class="t" style="left:716px;width:300px;text-align:right;top:270px;font-size:12px;letter-spacing:-0.6px;word-spacing:0.6px">3 158.73</div>
<div class="t" style="left:1047px;top:270px;font-size:12px">loss trade</div>
<div class="t" style="left:1245px;width:300px;text-align:right;top:270px;font-size:12px;letter-spacing:-0.6px;word-spacing:0.6px">-1 644.38</div>
<div class="a" style="left:0;top:285px;width:1550px;height:19px;background:#eaeaea"></div>
<div class="t" style="left:200px;width:294px;text-align:right;top:289px;font-size:12px;letter-spacing:-0.6px;word-spacing:0.6px">Average</div>
<div class="t" style="left:525px;top:289px;font-size:12px">profit trade</div>
<div class="t" style="left:716px;width:300px;text-align:right;top:289px;font-size:12px;letter-spacing:-0.6px;word-spacing:0.6px">265.52</div>
<div class="t" style="left:1047px;top:289px;font-size:12px">loss trade</div>
<div class="t" style="left:1245px;width:300px;text-align:right;top:289px;font-size:12px;letter-spacing:-0.6px;word-spacing:0.6px">-205.18</div>
<div class="a" style="left:0;top:304px;width:1550px;height:19px;background:#fff"></div>
<div class="t" style="left:200px;width:294px;text-align:right;top:308px;font-size:12px;letter-spacing:-0.6px;word-spacing:0.6px">Maximum</div>
<div class="t" style="left:525px;top:308px;font-size:12px">consecutive wins ($)</div>
<div class="t" style="left:716px;width:300px;text-align:right;top:308px;font-size:12px;letter-spacing:-0.6px;word-spacing:0.6px">8 (1 693.64)</div>
<div class="t" style="left:1047px;top:308px;font-size:12px">consecutive losses ($)</div>
<div class="t" style="left:1245px;width:300px;text-align:right;top:308px;font-size:12px;letter-spacing:-0.6px;word-spacing:0.6px">11 (-2 443.77)</div>
<div class="a" style="left:0;top:323px;width:1550px;height:19px;background:#eaeaea"></div>
<div class="t" style="left:200px;width:294px;text-align:right;top:327px;font-size:12px;letter-spacing:-0.6px;word-spacing:0.6px">Maximal</div>
<div class="t" style="left:525px;top:327px;font-size:12px">consecutive profit (count)</div>
<div class="t" style="left:716px;width:300px;text-align:right;top:327px;font-size:12px;letter-spacing:-0.6px;word-spacing:0.6px">5 266.27 (4)</div>
<div class="t" style="left:1047px;top:327px;font-size:12px">consecutive loss (count)</div>
<div class="t" style="left:1245px;width:300px;text-align:right;top:327px;font-size:12px;letter-spacing:-0.6px;word-spacing:0.6px">-2 700.21 (7)</div>
<div class="a" style="left:0;top:342px;width:1550px;height:19px;background:#fff"></div>
<div class="t" style="left:200px;width:294px;text-align:right;top:346px;font-size:12px;letter-spacing:-0.6px;word-spacing:0.6px">Average</div>
<div class="t" style="left:525px;top:346px;font-size:12px">consecutive wins</div>
<div class="t" style="left:716px;width:300px;text-align:right;top:346px;font-size:12px;letter-spacing:-0.6px;word-spacing:0.6px">2</div>
<div class="t" style="left:1047px;top:346px;font-size:12px">consecutive losses</div>
<div class="t" style="left:1245px;width:300px;text-align:right;top:346px;font-size:12px;letter-spacing:-0.6px;word-spacing:0.6px">2</div>
<div class="a" style="left:0;top:361px;width:1550px;height:19px;background:#eaeaea"></div>
<div class="a" style="left:524px;top:2px;width:1023px;height:15px;background:#98f880;border:1px solid #555560"></div>
</div>
<div class="a" style="left:1576px;top:395px;width:16px;height:378px;background:#f0f0f0"></div>
<div class="a" style="left:1576px;top:412px;width:15px;height:86px;background:#cdcdcd"></div>
<svg class="a" style="left:1575px;top:395px" width="17" height="378" viewBox="0 0 17 378"><path d="M4.6 11.8L8.3 7.8L12 11.8M4.6 366.2L8.3 370.2L12 366.2" fill="none" stroke="#555" stroke-width="1.9"/></svg>
<div class="a" style="left:26px;top:773px;width:1566px;height:1px;background:#000"></div>
<div class="a" style="left:215px;top:773px;width:64px;height:20px;background:#fff;border-left:1px solid #000;border-right:1px solid #000;border-bottom:1px solid #000"></div>
<div class="t" style="left:41px;top:777px;font-size:12px;color:#7a7a7a">Overview</div>
<div class="t" style="left:110px;top:777px;font-size:12px;color:#7a7a7a">Settings</div>
<div class="t" style="left:172px;top:777px;font-size:12px;color:#7a7a7a">Inputs</div>
<div class="t" style="left:225px;top:777px;font-size:12px;color:#000">Backtest</div>
<div class="t" style="left:289px;top:777px;font-size:12px;color:#7a7a7a">Graph</div>
<div class="t" style="left:341px;top:777px;font-size:12px;color:#7a7a7a">Agents</div>
<div class="t" style="left:397px;top:777px;font-size:12px;color:#7a7a7a">Journal</div>
<div class="a" style="left:100px;top:777px;width:1px;height:14px;background:#707070"></div>
<div class="a" style="left:162px;top:777px;width:1px;height:14px;background:#707070"></div>
<div class="a" style="left:331px;top:777px;width:1px;height:14px;background:#707070"></div>
<div class="a" style="left:388px;top:777px;width:1px;height:14px;background:#707070"></div>
<div class="t" style="left:1400px;width:108px;text-align:right;top:780px;font-size:11.2px">00:10:48 / 00:10:48</div>
<div class="a" style="left:1517px;top:776px;width:74px;height:18px;background:#99cc66"></div>
<div class="t" style="left:1517px;width:74px;text-align:center;top:780px;font-size:11.5px">Start</div><div class="a" style="left:8px;top:798px;width:1584px;height:1px;background:#a0a0a0"></div>
<div class="a" style="left:8px;top:799px;width:1584px;height:4px;background:#f0f0f0;border-top:1px solid #fff"></div>
<div class="a" style="left:899px;top:801px;width:1px;height:2px;background:#808080"></div>
<div class="a" style="left:1027px;top:801px;width:1px;height:2px;background:#808080"></div>
<div class="a" style="left:1125px;top:801px;width:1px;height:2px;background:#808080"></div>
<div class="a" style="left:1196px;top:801px;width:1px;height:2px;background:#808080"></div>
<div class="a" style="left:1267px;top:801px;width:1px;height:2px;background:#808080"></div>
<div class="a" style="left:1335px;top:801px;width:1px;height:2px;background:#808080"></div>
<div class="a" style="left:1405px;top:801px;width:1px;height:2px;background:#808080"></div>
<div class="a" style="left:1471px;top:801px;width:1px;height:2px;background:#808080"></div>
</body></html>
